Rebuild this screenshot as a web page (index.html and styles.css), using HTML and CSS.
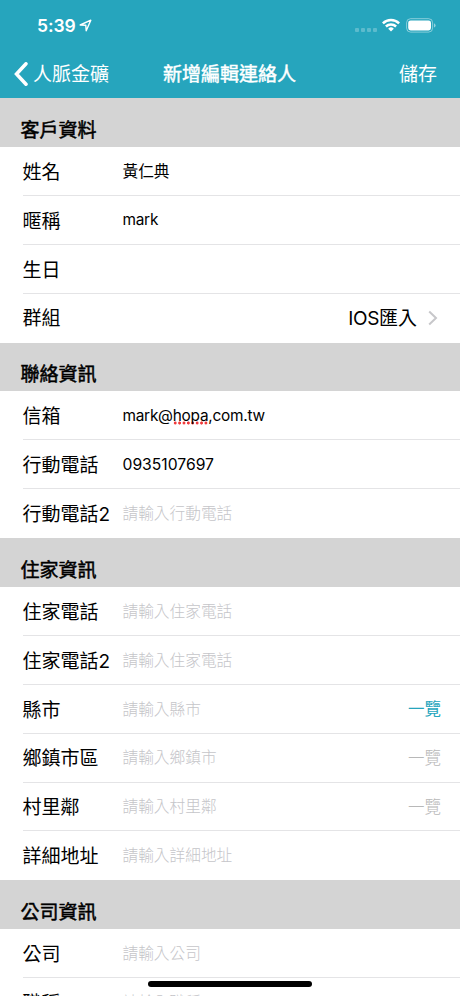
FILE: index.html
```
<!DOCTYPE html>
<html lang="zh-Hant">
<head>
<meta charset="utf-8">
<title>新增編輯連絡人</title>
<link rel="stylesheet" href="styles.css">
</head>
<body>
<div class="screen">
  <header class="top">
    <div class="status">
      <span class="time">5:39</span>
      <svg class="location" width="13" height="13" viewBox="0 0 13 13"><path d="M1.2 6 11.8 1.2 7.2 11.8 6.8 6.3Z" fill="none" stroke="#fff" stroke-width="1.4" stroke-linejoin="round"/></svg>
      <span class="signal"><i></i><i></i><i></i><i></i></span>
      <svg class="wifi" width="18" height="14" viewBox="0 0 18 14"><g fill="none" stroke="#fff" stroke-width="2.5"><path d="M.9 5.3A11.6 11.6 0 0 1 17.1 5.3"/><path d="M3.9 8.5A7.3 7.3 0 0 1 14.1 8.5"/></g><path d="M6.2 10.7A4 4 0 0 1 11.8 10.7L9 13.5Z" fill="#fff"/></svg>
      <svg class="battery" width="30" height="15" viewBox="0 0 30 15"><rect x=".6" y=".7" width="26" height="13.4" rx="4" fill="none" stroke="#fff" stroke-opacity=".45"/><rect x="2.2" y="2.4" width="22.8" height="10" rx="2.4" fill="#fff"/><path d="M28 5.2Q29.6 6 29.6 7.4T28 9.6Z" fill="#fff" fill-opacity=".5"/></svg>
    </div>
    <nav class="nav">
      <a class="back"><svg width="14" height="24" viewBox="0 0 14 24"><path d="M12 1.8 2.5 12 12 22.2" fill="none" stroke="#fff" stroke-width="3.5" stroke-linecap="round" stroke-linejoin="miter"/></svg><span>人脈金礦</span></a>
      <h1>新增編輯連絡人</h1>
      <a class="save">儲存</a>
    </nav>
  </header>
  <main>
    <section>
      <h2>客戶資料</h2>
      <div class="row"><span class="label">姓名</span><span class="value">黃仁典</span></div>
      <div class="row"><span class="label">暱稱</span><span class="value latin">mark</span></div>
      <div class="row"><span class="label">生日</span></div>
      <div class="row"><span class="label">群組</span><span class="group"><span class="system">IOS</span>匯入</span><svg class="chevron" width="10" height="16" viewBox="0 0 10 16"><path d="M1.2 1.5 8 8 1.2 14.5" fill="none" stroke="#c7c7ca" stroke-width="2"/></svg></div>
    </section>
    <section>
      <h2>聯絡資訊</h2>
      <div class="row"><span class="label">信箱</span><span class="value latin">mark@<span class="misspelled">hopa</span>,com.tw</span></div>
      <div class="row"><span class="label">行動電話</span><span class="value">0935107697</span></div>
      <div class="row"><span class="label">行動電話2</span><span class="value hint">請輸入行動電話</span></div>
    </section>
    <section>
      <h2>住家資訊</h2>
      <div class="row"><span class="label">住家電話</span><span class="value hint">請輸入住家電話</span></div>
      <div class="row"><span class="label">住家電話2</span><span class="value hint">請輸入住家電話</span></div>
      <div class="row"><span class="label">縣市</span><span class="value hint">請輸入縣市</span><a class="list active">一覽</a></div>
      <div class="row"><span class="label">鄉鎮市區</span><span class="value hint">請輸入鄉鎮市</span><a class="list">一覽</a></div>
      <div class="row"><span class="label">村里鄰</span><span class="value hint">請輸入村里鄰</span><a class="list">一覽</a></div>
      <div class="row"><span class="label">詳細地址</span><span class="value hint">請輸入詳細地址</span></div>
    </section>
    <section>
      <h2>公司資訊</h2>
      <div class="row"><span class="label">公司</span><span class="value hint">請輸入公司</span></div>
      <div class="row"><span class="label">職稱</span><span class="value hint">請輸入職稱</span></div>
    </section>
  </main>
  <div class="home-indicator"></div>
</div>
</body>
</html>
```

FILE: styles.css
```
* { box-sizing: border-box; }
body {
  margin: 0;
  background: #fff;
  color: #000;
  font-family: Inter, "Noto Sans CJK TC", sans-serif;
}
.screen {
  position: relative;
  width: 460px;
  height: 996px;
  overflow: hidden;
}
.top {
  height: 98.1px;
  background: #26a5bd;
  color: #fff;
}
.status {
  display: flex;
  align-items: center;
  height: 50px;
  padding: 0 24px 0 37px;
}
.time {
  width: 39px;
  font-size: 17.5px;
  font-weight: 600;
  letter-spacing: -.1px;
}
.location { margin-left: 3px; }
.signal {
  display: flex;
  gap: 2px;
  margin: 9px 5px 0 auto;
}
.signal i {
  width: 4px;
  height: 4px;
  border-radius: 1px;
  background: rgba(255, 255, 255, .25);
}
.wifi { margin-right: 6px; }
.nav {
  display: grid;
  grid-template-columns: 1fr auto 1fr;
  align-items: center;
  height: 48px;
  padding: 0 23px 0 14px;
  font-size: 19px;
  line-height: 28px;
}
.back {
  display: flex;
  align-items: center;
  gap: 5px;
}
.back span,
.save { padding-top: 2px; }
h1 {
  margin: 0;
  padding-top: 2px;
  font-size: 19px;
  font-weight: 400;
  line-height: 28px;
  -webkit-text-stroke: .45px #fff;
  transform: translateX(4px);
}
.save { text-align: right; }
h2 {
  height: 48.9px;
  margin: 0;
  padding: 18.6px 0 0 20.5px;
  background: #d4d4d4;
  font-size: 19px;
  font-weight: 400;
  line-height: 28px;
  -webkit-text-stroke: .5px #000;
}
.row {
  display: flex;
  align-items: center;
  height: 48.9px;
  margin-left: 22.5px;
  padding-right: 19px;
  border-bottom: 1px solid #e4e4e6;
  line-height: 28px;
}
.row:last-child { border-bottom-color: transparent; }
.label {
  width: 100px;
  padding-top: 3.6px;
  font-size: 19px;
  white-space: nowrap;
}
.value {
  padding-top: 1.6px;
  font-size: 15.7px;
}
.latin {
  padding-top: 1px;
  font-size: 15.4px;
  letter-spacing: -.25px;
}
.hint { color: #c5c5c9; font-weight: 300; }
.misspelled {
  background: radial-gradient(circle, #f0393b 1.3px, transparent 1.8px) 0 100% / 4.4px 4px repeat-x;
}
.group {
  margin-left: auto;
  padding-top: 3px;
  font-size: 19px;
}
.system { letter-spacing: -.4px; }
.chevron { margin: 0 3px 0 11px; }
.list {
  margin-left: auto;
  color: #b8b8b8;
  font-size: 16.5px;
  font-weight: 300;
}
.active { color: #26a5bd; font-weight: 400; }
.home-indicator {
  position: absolute;
  left: 148px;
  bottom: 9px;
  width: 164px;
  height: 6px;
  border-radius: 3px;
  background: #000;
}
```
